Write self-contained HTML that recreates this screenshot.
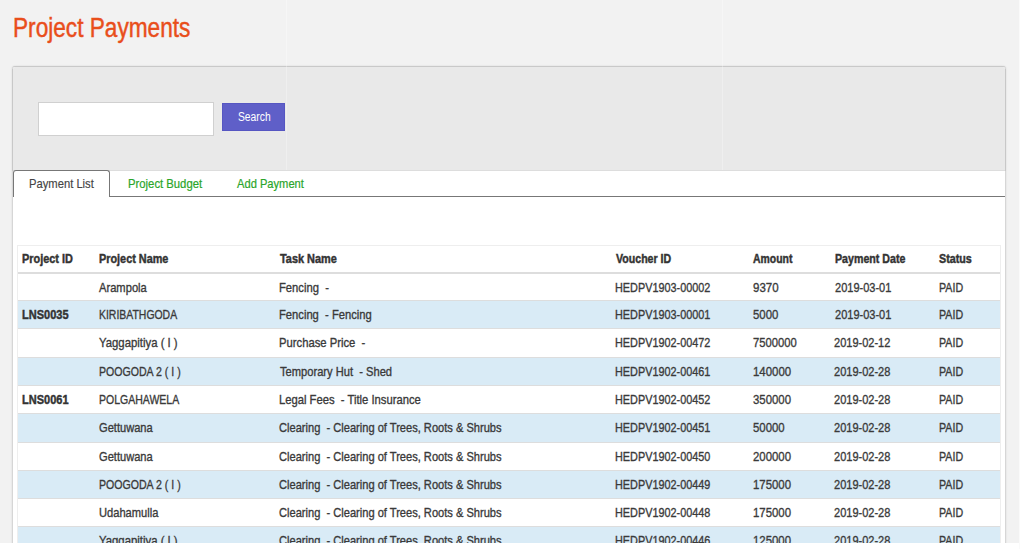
<!DOCTYPE html>
<html><head><meta charset="utf-8">
<style>
*{margin:0;padding:0;box-sizing:border-box}
html,body{width:1020px;height:549px;overflow:hidden;background:#f2f2f2;font-family:"Liberation Sans",sans-serif;position:relative}
.t{position:absolute;white-space:pre;transform-origin:0 0;color:#3a3a3a;-webkit-text-stroke:0.35px currentColor}
.b{position:absolute}
</style></head><body>

<div class="t" style="left:13.41px;top:11.6px;font-size:27px;line-height:32px;transform:scaleX(0.8385);color:#e94e1b;-webkit-text-stroke:0.45px currentColor">Project Payments</div>
<div class="b" style="left:12px;top:66px;width:994px;height:500px;background:#fff;border:1px solid #d6d6d6;border-top-color:#c9c9c9;border-radius:3px 3px 0 0;box-shadow:0 0 2px rgba(0,0,0,.12)"></div>
<div class="b" style="left:12px;top:69px;width:1px;height:102px;background:#c8c8c8"></div>
<div class="b" style="left:1005px;top:69px;width:1px;height:102px;background:#c8c8c8"></div>
<div class="b" style="left:13px;top:67px;width:992px;height:103px;background:#e9e9e9;border-radius:2px 2px 0 0"></div>
<div class="b" style="left:13px;top:170px;width:992px;height:1px;background:#dddddd"></div>
<div class="b" style="left:38px;top:102px;width:176px;height:34px;background:#fff;border:1px solid #d0d0d0"></div>
<div class="b" style="left:222px;top:103px;width:63px;height:28px;background:#5f5fc8;border:1px solid #5656c2"></div>
<div class="t" style="left:237.57px;top:110px;font-size:12px;line-height:15px;transform:scaleX(0.8587);color:#fff;-webkit-text-stroke:0">Search</div>
<div class="b" style="left:13px;top:196px;width:992px;height:1px;background:#777777"></div>
<div class="b" style="left:13px;top:170px;width:97px;height:27px;background:#fff;border:1px solid #777777;border-bottom:none;border-radius:3px 3px 0 0"></div>
<div class="t" style="left:29.20px;top:176px;font-size:13px;line-height:15px;transform:scaleX(0.8628);color:#444;-webkit-text-stroke:0.15px currentColor">Payment List</div>
<div class="t" style="left:127.99px;top:176px;font-size:13px;line-height:15px;transform:scaleX(0.8691);color:#2aa52a;-webkit-text-stroke:0.2px currentColor">Project Budget</div>
<div class="t" style="left:236.96px;top:176px;font-size:13px;line-height:15px;transform:scaleX(0.8571);color:#2aa52a;-webkit-text-stroke:0.2px currentColor">Add Payment</div>
<div class="b" style="left:17px;top:245px;width:984px;height:320px;background:#fff;border:1px solid #eeeeee"></div>
<div class="b" style="left:18px;top:272px;width:982px;height:2px;background:#dddddd"></div>
<div class="b" style="left:18px;top:300px;width:982px;height:1px;background:#dddddd"></div>
<div class="b" style="left:18px;top:301px;width:982px;height:27px;background:#d9ebf6"></div>
<div class="b" style="left:18px;top:328px;width:982px;height:1px;background:#dddddd"></div>
<div class="b" style="left:18px;top:357px;width:982px;height:1px;background:#dddddd"></div>
<div class="b" style="left:18px;top:358px;width:982px;height:27px;background:#d9ebf6"></div>
<div class="b" style="left:18px;top:385px;width:982px;height:1px;background:#dddddd"></div>
<div class="b" style="left:18px;top:413px;width:982px;height:1px;background:#dddddd"></div>
<div class="b" style="left:18px;top:414px;width:982px;height:28px;background:#d9ebf6"></div>
<div class="b" style="left:18px;top:442px;width:982px;height:1px;background:#dddddd"></div>
<div class="b" style="left:18px;top:470px;width:982px;height:1px;background:#dddddd"></div>
<div class="b" style="left:18px;top:471px;width:982px;height:27px;background:#d9ebf6"></div>
<div class="b" style="left:18px;top:498px;width:982px;height:1px;background:#dddddd"></div>
<div class="b" style="left:18px;top:526px;width:982px;height:1px;background:#dddddd"></div>
<div class="b" style="left:18px;top:527px;width:982px;height:27px;background:#d9ebf6"></div>
<div class="t" style="left:21.52px;top:251px;font-size:13px;line-height:15px;transform:scaleX(0.8381);font-weight:bold;-webkit-text-stroke:0.45px currentColor;color:#333">Project ID</div>
<div class="t" style="left:98.82px;top:251px;font-size:13px;line-height:15px;transform:scaleX(0.8352);font-weight:bold;-webkit-text-stroke:0.45px currentColor;color:#333">Project Name</div>
<div class="t" style="left:279.85px;top:251px;font-size:13px;line-height:15px;transform:scaleX(0.8397);font-weight:bold;-webkit-text-stroke:0.45px currentColor;color:#333">Task Name</div>
<div class="t" style="left:615.67px;top:251px;font-size:13px;line-height:15px;transform:scaleX(0.8156);font-weight:bold;-webkit-text-stroke:0.45px currentColor;color:#333">Voucher ID</div>
<div class="t" style="left:753.35px;top:251px;font-size:13px;line-height:15px;transform:scaleX(0.8022);font-weight:bold;-webkit-text-stroke:0.45px currentColor;color:#333">Amount</div>
<div class="t" style="left:834.63px;top:251px;font-size:13px;line-height:15px;transform:scaleX(0.8187);font-weight:bold;-webkit-text-stroke:0.45px currentColor;color:#333">Payment Date</div>
<div class="t" style="left:939.45px;top:251px;font-size:13px;line-height:15px;transform:scaleX(0.8258);font-weight:bold;-webkit-text-stroke:0.45px currentColor;color:#333">Status</div>
<div class="t" style="left:99.36px;top:280.3px;font-size:13px;line-height:15px;transform:scaleX(0.8588)">Arampola</div>
<div class="t" style="left:279.00px;top:280.3px;font-size:13px;line-height:15px;transform:scaleX(0.8635)">Fencing  -</div>
<div class="t" style="left:614.92px;top:280.3px;font-size:13px;line-height:15px;transform:scaleX(0.8354)">HEDPV1903-00002</div>
<div class="t" style="left:752.99px;top:280.3px;font-size:13px;line-height:15px;transform:scaleX(0.8872)">9370</div>
<div class="t" style="left:834.79px;top:280.3px;font-size:13px;line-height:15px;transform:scaleX(0.8472)">2019-03-01</div>
<div class="t" style="left:939.04px;top:280.3px;font-size:13px;line-height:15px;transform:scaleX(0.8197)">PAID</div>
<div class="t" style="left:21.51px;top:307.3px;font-size:13px;line-height:15px;transform:scaleX(0.8469);font-weight:bold;-webkit-text-stroke:0.45px currentColor;color:#333">LNS0035</div>
<div class="t" style="left:98.65px;top:307.3px;font-size:13px;line-height:15px;transform:scaleX(0.8032)">KIRIBATHGODA</div>
<div class="t" style="left:279.00px;top:307.3px;font-size:13px;line-height:15px;transform:scaleX(0.8617)">Fencing  - Fencing</div>
<div class="t" style="left:614.86px;top:307.3px;font-size:13px;line-height:15px;transform:scaleX(0.8354)">HEDPV1903-00001</div>
<div class="t" style="left:752.62px;top:307.3px;font-size:13px;line-height:15px;transform:scaleX(0.8772)">5000</div>
<div class="t" style="left:834.79px;top:307.3px;font-size:13px;line-height:15px;transform:scaleX(0.8472)">2019-03-01</div>
<div class="t" style="left:939.04px;top:307.3px;font-size:13px;line-height:15px;transform:scaleX(0.8197)">PAID</div>
<div class="t" style="left:99.07px;top:335.3px;font-size:13px;line-height:15px;transform:scaleX(0.8731)">Yaggapitiya ( I )</div>
<div class="t" style="left:279.00px;top:335.3px;font-size:13px;line-height:15px;transform:scaleX(0.8659)">Purchase Price  -</div>
<div class="t" style="left:614.86px;top:335.3px;font-size:13px;line-height:15px;transform:scaleX(0.8354)">HEDPV1902-00472</div>
<div class="t" style="left:753.14px;top:335.3px;font-size:13px;line-height:15px;transform:scaleX(0.8648)">7500000</div>
<div class="t" style="left:834.35px;top:335.3px;font-size:13px;line-height:15px;transform:scaleX(0.8472)">2019-02-12</div>
<div class="t" style="left:939.04px;top:335.3px;font-size:13px;line-height:15px;transform:scaleX(0.8197)">PAID</div>
<div class="t" style="left:98.65px;top:364.3px;font-size:13px;line-height:15px;transform:scaleX(0.8134)">POOGODA 2 ( I )</div>
<div class="t" style="left:279.75px;top:364.3px;font-size:13px;line-height:15px;transform:scaleX(0.8566)">Temporary Hut  - Shed</div>
<div class="t" style="left:614.86px;top:364.3px;font-size:13px;line-height:15px;transform:scaleX(0.8354)">HEDPV1902-00461</div>
<div class="t" style="left:752.75px;top:364.3px;font-size:13px;line-height:15px;transform:scaleX(0.8794)">140000</div>
<div class="t" style="left:834.35px;top:364.3px;font-size:13px;line-height:15px;transform:scaleX(0.8472)">2019-02-28</div>
<div class="t" style="left:939.04px;top:364.3px;font-size:13px;line-height:15px;transform:scaleX(0.8197)">PAID</div>
<div class="t" style="left:21.51px;top:392.3px;font-size:13px;line-height:15px;transform:scaleX(0.8469);font-weight:bold;-webkit-text-stroke:0.45px currentColor;color:#333">LNS0061</div>
<div class="t" style="left:98.65px;top:392.3px;font-size:13px;line-height:15px;transform:scaleX(0.8082)">POLGAHAWELA</div>
<div class="t" style="left:279.00px;top:392.3px;font-size:13px;line-height:15px;transform:scaleX(0.8642)">Legal Fees  - Title Insurance</div>
<div class="t" style="left:614.86px;top:392.3px;font-size:13px;line-height:15px;transform:scaleX(0.8354)">HEDPV1902-00452</div>
<div class="t" style="left:752.62px;top:392.3px;font-size:13px;line-height:15px;transform:scaleX(0.8772)">350000</div>
<div class="t" style="left:834.35px;top:392.3px;font-size:13px;line-height:15px;transform:scaleX(0.8472)">2019-02-28</div>
<div class="t" style="left:939.04px;top:392.3px;font-size:13px;line-height:15px;transform:scaleX(0.8197)">PAID</div>
<div class="t" style="left:98.93px;top:420.3px;font-size:13px;line-height:15px;transform:scaleX(0.8546)">Gettuwana</div>
<div class="t" style="left:279.33px;top:420.3px;font-size:13px;line-height:15px;transform:scaleX(0.8532)">Clearing  - Clearing of Trees, Roots &amp; Shrubs</div>
<div class="t" style="left:614.86px;top:420.3px;font-size:13px;line-height:15px;transform:scaleX(0.8354)">HEDPV1902-00451</div>
<div class="t" style="left:752.62px;top:420.3px;font-size:13px;line-height:15px;transform:scaleX(0.8772)">50000</div>
<div class="t" style="left:834.35px;top:420.3px;font-size:13px;line-height:15px;transform:scaleX(0.8472)">2019-02-28</div>
<div class="t" style="left:939.04px;top:420.3px;font-size:13px;line-height:15px;transform:scaleX(0.8197)">PAID</div>
<div class="t" style="left:98.93px;top:449.3px;font-size:13px;line-height:15px;transform:scaleX(0.8546)">Gettuwana</div>
<div class="t" style="left:279.33px;top:449.3px;font-size:13px;line-height:15px;transform:scaleX(0.8532)">Clearing  - Clearing of Trees, Roots &amp; Shrubs</div>
<div class="t" style="left:614.86px;top:449.3px;font-size:13px;line-height:15px;transform:scaleX(0.8354)">HEDPV1902-00450</div>
<div class="t" style="left:752.62px;top:449.3px;font-size:13px;line-height:15px;transform:scaleX(0.8772)">200000</div>
<div class="t" style="left:834.35px;top:449.3px;font-size:13px;line-height:15px;transform:scaleX(0.8472)">2019-02-28</div>
<div class="t" style="left:939.04px;top:449.3px;font-size:13px;line-height:15px;transform:scaleX(0.8197)">PAID</div>
<div class="t" style="left:98.65px;top:477.3px;font-size:13px;line-height:15px;transform:scaleX(0.8134)">POOGODA 2 ( I )</div>
<div class="t" style="left:279.33px;top:477.3px;font-size:13px;line-height:15px;transform:scaleX(0.8532)">Clearing  - Clearing of Trees, Roots &amp; Shrubs</div>
<div class="t" style="left:614.86px;top:477.3px;font-size:13px;line-height:15px;transform:scaleX(0.8354)">HEDPV1902-00449</div>
<div class="t" style="left:752.62px;top:477.3px;font-size:13px;line-height:15px;transform:scaleX(0.8772)">175000</div>
<div class="t" style="left:834.35px;top:477.3px;font-size:13px;line-height:15px;transform:scaleX(0.8472)">2019-02-28</div>
<div class="t" style="left:939.04px;top:477.3px;font-size:13px;line-height:15px;transform:scaleX(0.8197)">PAID</div>
<div class="t" style="left:98.63px;top:505.3px;font-size:13px;line-height:15px;transform:scaleX(0.8554)">Udahamulla</div>
<div class="t" style="left:279.33px;top:505.3px;font-size:13px;line-height:15px;transform:scaleX(0.8532)">Clearing  - Clearing of Trees, Roots &amp; Shrubs</div>
<div class="t" style="left:614.86px;top:505.3px;font-size:13px;line-height:15px;transform:scaleX(0.8354)">HEDPV1902-00448</div>
<div class="t" style="left:752.62px;top:505.3px;font-size:13px;line-height:15px;transform:scaleX(0.8772)">175000</div>
<div class="t" style="left:834.35px;top:505.3px;font-size:13px;line-height:15px;transform:scaleX(0.8472)">2019-02-28</div>
<div class="t" style="left:939.04px;top:505.3px;font-size:13px;line-height:15px;transform:scaleX(0.8197)">PAID</div>
<div class="t" style="left:99.07px;top:533.3px;font-size:13px;line-height:15px;transform:scaleX(0.8731)">Yaggapitiya ( I )</div>
<div class="t" style="left:279.33px;top:533.3px;font-size:13px;line-height:15px;transform:scaleX(0.8532)">Clearing  - Clearing of Trees, Roots &amp; Shrubs</div>
<div class="t" style="left:614.86px;top:533.3px;font-size:13px;line-height:15px;transform:scaleX(0.8354)">HEDPV1902-00446</div>
<div class="t" style="left:752.62px;top:533.3px;font-size:13px;line-height:15px;transform:scaleX(0.8772)">125000</div>
<div class="t" style="left:834.35px;top:533.3px;font-size:13px;line-height:15px;transform:scaleX(0.8472)">2019-02-28</div>
<div class="t" style="left:939.04px;top:533.3px;font-size:13px;line-height:15px;transform:scaleX(0.8197)">PAID</div>
<div class="b" style="left:286px;top:0;width:1px;height:170px;background:rgba(255,255,255,.3)"></div>
<div class="b" style="left:722px;top:0;width:1px;height:170px;background:rgba(255,255,255,.3)"></div>
<div class="b" style="left:0;top:543px;width:1020px;height:6px;background:#fff"></div>
<div class="b" style="left:1019px;top:0;width:1px;height:549px;background:#fafafa"></div>
</body></html>
